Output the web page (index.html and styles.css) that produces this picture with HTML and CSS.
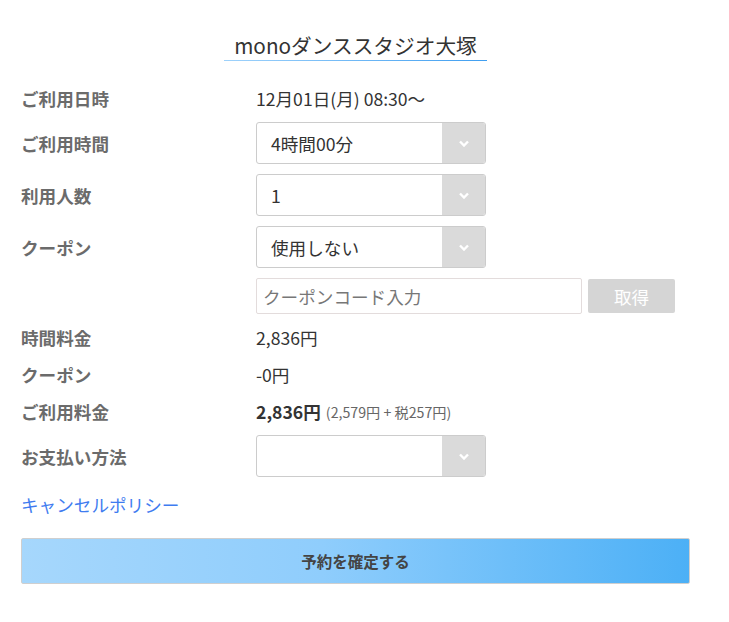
FILE: index.html
```html
<!DOCTYPE html>
<html lang="ja">
<head>
    <meta charset="UTF-8">
    <title>予約確認 - monoダンススタジオ大塚</title>
    <link rel="stylesheet" href="styles.css">
</head>
<body>
    <div class="container">
        <div class="title-wrap">
            <h1 class="title">monoダンススタジオ大塚</h1>
        </div>

        <div class="form">
            <div class="label">ご利用日時</div>
            <div class="value">12月01日(月) 08:30〜</div>

            <div class="label">ご利用時間</div>
            <div class="select">
                <span class="select-text">4時間00分</span>
                <span class="select-arrow">
                    <svg width="10" height="7" viewBox="0 0 10 7"><path d="M1 1.5 L5 5.5 L9 1.5" stroke="#fff" stroke-width="2.4" fill="none"/></svg>
                </span>
            </div>

            <div class="label">利用人数</div>
            <div class="select">
                <span class="select-text">1</span>
                <span class="select-arrow">
                    <svg width="10" height="7" viewBox="0 0 10 7"><path d="M1 1.5 L5 5.5 L9 1.5" stroke="#fff" stroke-width="2.4" fill="none"/></svg>
                </span>
            </div>

            <div class="label">クーポン</div>
            <div class="select">
                <span class="select-text">使用しない</span>
                <span class="select-arrow">
                    <svg width="10" height="7" viewBox="0 0 10 7"><path d="M1 1.5 L5 5.5 L9 1.5" stroke="#fff" stroke-width="2.4" fill="none"/></svg>
                </span>
            </div>

            <div class="label"></div>
            <div class="coupon-row">
                <input class="coupon-input" type="text" placeholder="クーポンコード入力">
                <button class="coupon-btn" disabled>取得</button>
            </div>

            <div class="label">時間料金</div>
            <div class="value">2,836円</div>

            <div class="label">クーポン</div>
            <div class="value">-0円</div>

            <div class="label">ご利用料金</div>
            <div class="value"><strong>2,836円</strong> <span class="tax">(2,579円 + 税257円)</span></div>

            <div class="label">お支払い方法</div>
            <div class="select">
                <span class="select-text"></span>
                <span class="select-arrow">
                    <svg width="10" height="7" viewBox="0 0 10 7"><path d="M1 1.5 L5 5.5 L9 1.5" stroke="#fff" stroke-width="2.4" fill="none"/></svg>
                </span>
            </div>
        </div>

        <a class="policy" href="#">キャンセルポリシー</a>

        <button class="submit">予約を確定する</button>
    </div>
</body>
</html>
```

FILE: styles.css
```css
body {
    margin: 0;
    background: #fff;
    font-family: "Noto Sans CJK JP", "Noto Sans", sans-serif;
    color: #333;
}

.container {
    width: 669px;
    margin-left: 21px;
}

.title-wrap {
    text-align: center;
    padding-top: 30px;
}

.title {
    display: inline-block;
    margin: 0;
    padding: 0 10px;
    font-size: 20.7px;
    font-weight: 400;
    line-height: 30px;
    color: #333;
    border-bottom: 1px solid transparent;
    border-image: linear-gradient(to right, #9fd2fb, #3f9ef0) 1;
}

.form {
    display: grid;
    grid-template-columns: 235px 1fr;
    row-gap: 10px;
    margin-top: 24px;
}

.label {
    display: flex;
    align-items: center;
    min-height: 27px;
    font-size: 17.6px;
    font-weight: 700;
    color: #6b6b6b;
}

.value {
    display: flex;
    align-items: center;
    font-size: 17.6px;
    color: #333;
}

.value strong {
    font-weight: 700;
    margin-right: 5px;
}

.tax {
    font-size: 14.2px;
    color: #666;
}

.select {
    display: flex;
    width: 228px;
    height: 40px;
    border: 1px solid #ccc;
    border-radius: 3px;
    overflow: hidden;
}

.select-text {
    flex: 1;
    display: flex;
    align-items: center;
    padding-left: 14px;
    font-size: 17.6px;
    color: #333;
}

.select-arrow {
    width: 43px;
    background: #dadada;
    display: flex;
    align-items: center;
    justify-content: center;
}

.coupon-row {
    display: flex;
    align-items: center;
    gap: 6px;
}

.coupon-input {
    box-sizing: border-box;
    width: 326px;
    height: 36px;
    padding: 0 6px;
    border: 1px solid #e3dcdc;
    border-radius: 2px;
    font-family: inherit;
    font-size: 17.6px;
    color: #333;
    outline: none;
}

.coupon-input::placeholder {
    color: #777;
}

.coupon-btn {
    width: 87px;
    height: 34px;
    border: none;
    border-radius: 2px;
    background: #d5d5d5;
    color: #fff;
    font-family: inherit;
    font-size: 17.6px;
    padding: 0;
}

.policy {
    display: block;
    margin-top: 14px;
    line-height: 27px;
    font-size: 17.6px;
    color: #3f7cf0;
    text-decoration: none;
}

.submit {
    display: block;
    width: 669px;
    height: 46px;
    margin-top: 20px;
    border: 1px solid #cfcfcf;
    border-radius: 2px;
    background: linear-gradient(to right, #a6d7fc, #8fcdfc 45%, #4cb0f6);
    color: #444;
    font-family: inherit;
    font-size: 15.5px;
    font-weight: 700;
    cursor: pointer;
}
```
